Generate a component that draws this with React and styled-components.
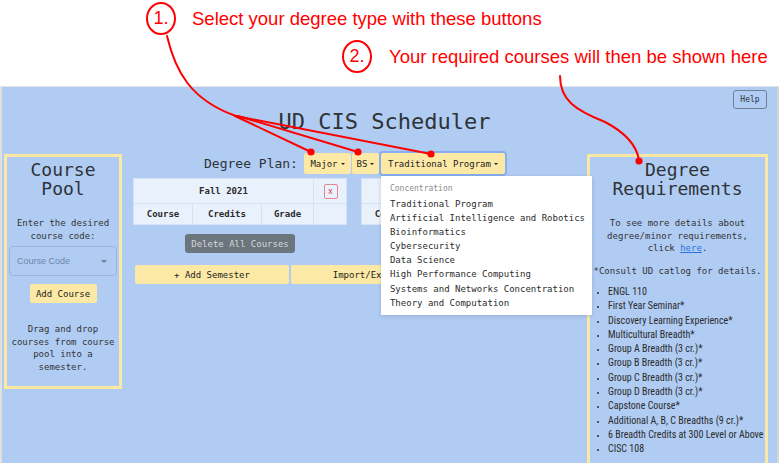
import React from "react";
import styled, { createGlobalStyle } from "styled-components";

const MONO = '"DejaVu Sans Mono", "Liberation Mono", monospace';
const SANS = '"Liberation Sans", Arial, sans-serif';
const LIST = '"Liberation Sans Narrow", "Roboto Condensed", Roboto, sans-serif';

const BLUE = "#b0ccf3";
const YELLOW = "#fde9a6";
const RED = "#ff0000";

const GlobalStyle = createGlobalStyle`
  html, body { margin: 0; padding: 0; background: #fff; }
  body { width: 779px; height: 463px; overflow: hidden; font-family: ${MONO}; }
  * { box-sizing: border-box; }
`;

const Page = styled.div`
  position: relative;
  width: 779px;
  height: 463px;
  overflow: hidden;
  display: flex;
  flex-direction: column;
`;

const Callouts = styled.div`
  height: 86px;
  flex: none;
  display: flex;
  flex-direction: column;
`;

const Callout = styled.div`
  display: flex;
  align-items: center;
  gap: ${(p) => p.$gap}px;
  margin-top: ${(p) => p.$top}px;
  margin-left: ${(p) => p.$left}px;
`;

const Bubble = styled.span`
  width: 30px;
  height: 33px;
  border: 2px solid ${RED};
  border-radius: 50%;
  display: flex;
  align-items: center;
  justify-content: center;
  font: 18px ${SANS};
  color: ${RED};
`;

const CalloutText = styled.span`
  font: 18.5px ${SANS};
  color: ${RED};
  white-space: nowrap;
`;

const Frame = styled.div`
  flex: 1;
  min-height: 0;
  background: ${BLUE};
  border-left: 2px solid #e0e0e0;
  border-right: 2px solid #d6d6d6;
  border-top: 1px solid #e4e4e4;
  display: flex;
  flex-direction: column;
`;

const Header = styled.header`
  display: grid;
  grid-template-columns: 1fr auto 1fr;
  padding: 3px 10px 0 0;
  height: 66px;
  flex: none;
`;

const Title = styled.h1`
  grid-column: 2;
  margin: 19px 0 0;
  font: 400 22px/26px ${MONO};
  color: #2f3237;
  white-space: nowrap;
`;

const HelpButton = styled.button`
  grid-column: 3;
  justify-self: end;
  align-self: start;
  width: 34px;
  height: 19px;
  padding: 0;
  background: transparent;
  border: 1px solid #6f7f96;
  border-radius: 3px;
  font: 8px ${MONO};
  color: #2f3237;
`;

const Body = styled.div`
  display: grid;
  grid-template-columns: 118px 1fr 181px;
  column-gap: 8px;
  padding: 0 9px 0 2px;
  align-items: start;
`;

const SidePanel = styled.aside`
  margin-top: 1px;
  border: 3px solid #fbe8a3;
  padding: 3px 2px 13px;
  display: flex;
  flex-direction: column;
  align-items: ${(p) => (p.$stretch ? "stretch" : "center")};
  text-align: center;
`;

const PanelTitle = styled.h2`
  margin: 0;
  font: 400 18px/19px ${MONO};
  color: #2f3237;
`;

const PanelText = styled.p`
  margin: ${(p) => p.$top}px 0 0;
  font: 9px/12.5px ${MONO};
  color: #333;
`;

const SelectBox = styled.div`
  align-self: stretch;
  margin-top: 4px;
  height: 30px;
  border: 1px solid #9ab6e0;
  border-radius: 4px;
  display: flex;
  align-items: center;
  justify-content: space-between;
  padding: 0 9px 0 7px;
  font: 9px ${SANS};
  color: #6e86a8;
`;

const Caret = styled.span`
  width: 0;
  height: 0;
  border-left: ${(p) => p.$size}px solid transparent;
  border-right: ${(p) => p.$size}px solid transparent;
  border-top: ${(p) => p.$size}px solid ${(p) => p.$color};
  margin-left: ${(p) => p.$gap}px;
  display: inline-block;
  vertical-align: middle;
`;

const YellowButton = styled.button`
  width: ${(p) => p.$w}px;
  height: 19px;
  padding: 0;
  border: none;
  border-radius: 2px;
  background: ${YELLOW};
  font: 9px ${MONO};
  color: #222;
  margin-top: ${(p) => p.$top || 0}px;
`;

const Middle = styled.div`
  display: flex;
  flex-direction: column;
`;

const PlanRow = styled.div`
  display: flex;
  justify-content: center;
  align-items: center;
  height: 21px;
  gap: 6px;
`;

const PlanLabel = styled.span`
  font: 13px ${MONO};
  color: #2f3237;
`;

const ButtonGroup = styled.div`
  display: flex;
  gap: 1px;
`;

const ToggleButton = styled.button`
  width: ${(p) => p.$w}px;
  height: 21px;
  padding: 0;
  margin-left: ${(p) => p.$ml || 0}px;
  border: none;
  border-radius: 2px;
  background: ${YELLOW};
  font: 9px ${MONO};
  color: #222;
  display: flex;
  align-items: center;
  justify-content: center;
  box-shadow: ${(p) => (p.$focus ? "0 0 0 2px #86aef0" : "none")};
`;

const DropWrap = styled.div`
  position: relative;
`;

const Menu = styled.div`
  position: absolute;
  top: 23px;
  left: 1px;
  width: 211px;
  background: #fff;
  box-shadow: 0 1px 4px rgba(0, 0, 0, 0.15);
  padding: 6px 0 5px;
  z-index: 5;
`;

const MenuHeader = styled.div`
  font: 8px/14px ${MONO};
  color: #8a8a8a;
  padding: 0 9px;
  margin-bottom: 1px;
`;

const MenuItem = styled.div`
  font: 9px/14.1px ${MONO};
  color: #2b2b2b;
  padding: 0 9px;
  white-space: nowrap;
`;

const Semesters = styled.div`
  display: flex;
  gap: 14px;
  margin-top: 4px;
  padding-left: 3px;
  align-items: flex-start;
`;

const SemesterColumn = styled.div`
  width: 214px;
  flex: none;
  display: flex;
  flex-direction: column;
  align-items: center;
`;

const Card = styled.div`
  width: 214px;
  display: grid;
  grid-template-columns: 59px 69px 52px 32px;
  background: #e9f1fc;
  border: 1px solid #d6e1f1;
`;

const HeadCell = styled.div`
  grid-column: span 3;
  height: 24px;
  display: flex;
  align-items: center;
  justify-content: center;
  font: 700 9px ${MONO};
  color: #2b2b2b;
  border-right: 1px solid #d6e1f1;
`;

const XCell = styled.div`
  height: 24px;
  display: flex;
  align-items: center;
  justify-content: center;
`;

const XButton = styled.button`
  width: 14px;
  height: 15px;
  padding: 0;
  border: 1px solid #e7868d;
  border-radius: 2px;
  background: transparent;
  color: #dc3545;
  font: 8px ${MONO};
  margin-left: 1px;
`;

const ColCell = styled.div`
  height: 21px;
  display: flex;
  align-items: center;
  justify-content: center;
  font: 700 9px ${MONO};
  color: #2b2b2b;
  border-top: 1px solid #d6e1f1;
  border-right: ${(p) => (p.$last ? "none" : "1px solid #d6e1f1")};
`;

const DeleteButton = styled.button`
  margin-top: 9px;
  width: 110px;
  height: 19px;
  padding: 0;
  border: none;
  border-radius: 3px;
  background: #6c757d;
  color: #d4d8dc;
  font: 9px ${MONO};
`;

const ActionRow = styled.div`
  display: flex;
  gap: 2px;
  margin-top: 12px;
  padding-left: 5px;
`;

const ReqList = styled.ul`
  margin: 8px 0 0;
  padding: 0 0 0 16px;
  text-align: left;
  font: 10px/14.3px ${LIST};
  color: #2b2b2b;
  white-space: nowrap;
  li::marker { font-size: 8px; }
`;

const Link = styled.a`
  color: #2f6fe0;
  text-decoration: underline;
`;

const Overlay = styled.svg`
  position: absolute;
  left: 0;
  top: 0;
  width: 779px;
  height: 463px;
  pointer-events: none;
  z-index: 20;
`;

const concentrations = [
  "Traditional Program",
  "Artificial Intelligence and Robotics",
  "Bioinformatics",
  "Cybersecurity",
  "Data Science",
  "High Performance Computing",
  "Systems and Networks Concentration",
  "Theory and Computation",
];

const requirements = [
  "ENGL 110",
  "First Year Seminar*",
  "Discovery Learning Experience*",
  "Multicultural Breadth*",
  "Group A Breadth (3 cr.)*",
  "Group B Breadth (3 cr.)*",
  "Group C Breadth (3 cr.)*",
  "Group D Breadth (3 cr.)*",
  "Capstone Course*",
  "Additional A, B, C Breadths (9 cr.)*",
  "6 Breadth Credits at 300 Level or Above",
  "CISC 108",
];

function Semester({ name }) {
  return (
    <SemesterColumn>
      <Card>
        <HeadCell>{name}</HeadCell>
        <XCell>
          <XButton>x</XButton>
        </XCell>
        <ColCell>Course</ColCell>
        <ColCell>Credits</ColCell>
        <ColCell>Grade</ColCell>
        <ColCell $last />
      </Card>
      <DeleteButton>Delete All Courses</DeleteButton>
    </SemesterColumn>
  );
}

export default function App() {
  return (
    <>
      <GlobalStyle />
      <Page>
        <Callouts>
          <Callout $top={2} $left={146} $gap={16}>
            <Bubble>1.</Bubble>
            <CalloutText>Select your degree type with these buttons</CalloutText>
          </Callout>
          <Callout $top={5} $left={342} $gap={17}>
            <Bubble>2.</Bubble>
            <CalloutText>Your required courses will then be shown here</CalloutText>
          </Callout>
        </Callouts>
        <Frame>
          <Header>
            <Title>UD CIS Scheduler</Title>
            <HelpButton>Help</HelpButton>
          </Header>
          <Body>
            <SidePanel>
              <PanelTitle>
                Course
                <br />
                Pool
              </PanelTitle>
              <PanelText $top={19}>Enter the desired course code:</PanelText>
              <SelectBox>
                <span>Course Code</span>
                <Caret $size={3} $color="#6e7f95" $gap={0} />
              </SelectBox>
              <YellowButton $w={67} $top={8}>
                Add Course
              </YellowButton>
              <PanelText $top={20}>
                Drag and drop courses from course pool into a semester.
              </PanelText>
            </SidePanel>

            <Middle>
              <PlanRow>
                <PlanLabel>Degree Plan:</PlanLabel>
                <ButtonGroup>
                  <ToggleButton $w={47}>
                    Major
                    <Caret $size={2.5} $color="#222" $gap={3} />
                  </ToggleButton>
                  <ToggleButton $w={27}>
                    BS
                    <Caret $size={2.5} $color="#222" $gap={3} />
                  </ToggleButton>
                  <DropWrap>
                    <ToggleButton $w={124} $ml={1} $focus>
                      Traditional Program
                      <Caret $size={2.5} $color="#222" $gap={3} />
                    </ToggleButton>
                    <Menu>
                      <MenuHeader>Concentration</MenuHeader>
                      {concentrations.map((c) => (
                        <MenuItem key={c}>{c}</MenuItem>
                      ))}
                    </Menu>
                  </DropWrap>
                </ButtonGroup>
              </PlanRow>
              <Semesters>
                <Semester name="Fall 2021" />
                <Semester name="Spring 2022" />
              </Semesters>
              <ActionRow>
                <YellowButton $w={154}>+ Add Semester</YellowButton>
                <YellowButton $w={154}>Import/Export</YellowButton>
              </ActionRow>
            </Middle>

            <SidePanel $stretch>
              <PanelTitle>
                Degree
                <br />
                Requirements
              </PanelTitle>
              <PanelText $top={19}>
                To see more details about degree/minor requirements, click{" "}
                <Link href="#">here</Link>.
              </PanelText>
              <PanelText $top={10}>*Consult UD catlog for details.</PanelText>
              <ReqList>
                {requirements.map((r) => (
                  <li key={r}>{r}</li>
                ))}
              </ReqList>
            </SidePanel>
          </Body>
        </Frame>

        <Overlay viewBox="0 0 779 463">
          <g fill="none" stroke={RED} strokeWidth="2" strokeLinecap="round">
            <path d="M167,36 C175,70 190,100 236,116" />
            <path d="M235,116 L311,152" />
            <path d="M238,116 L358,152" />
            <path d="M236,116 L431,154" />
            <path d="M560,76 C560,100 575,110 605,122 C630,135 637,148 639,160" />
          </g>
          <g fill={RED}>
            <circle cx="311" cy="152" r="3.6" />
            <circle cx="358" cy="152" r="3.6" />
            <circle cx="431" cy="154" r="3.6" />
            <circle cx="639" cy="161" r="3.6" />
          </g>
        </Overlay>
      </Page>
    </>
  );
}
